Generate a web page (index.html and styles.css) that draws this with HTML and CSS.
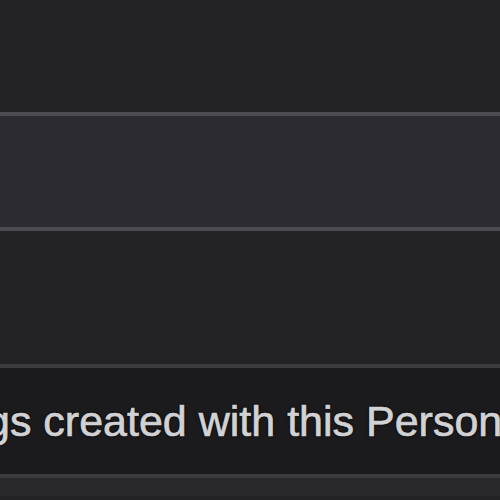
FILE: index.html
```html
<!DOCTYPE html>
<html lang="en">
<head>
    <meta charset="UTF-8">
    <meta name="viewport" content="width=device-width, initial-scale=1.0">
    <title>Persona Settings</title>
    <link rel="stylesheet" href="styles.css">
</head>
<body>
    <div class="page">
        <div class="header-space"></div>

        <div class="row row-light"></div>

        <div class="row row-plain"></div>

        <div class="note">
            <p class="note-text">gs created with this Persona</p>
        </div>

        <div class="row row-footer"></div>
    </div>
</body>
</html>
```

FILE: styles.css
```css
body {
    margin: 0;
    background-color: #232326;
    font-family: "Liberation Sans", Arial, sans-serif;
    overflow: hidden;
}
.page {
    width: 500px;
    height: 500px;
    display: flex;
    flex-direction: column;
    overflow: hidden;
}
.header-space {
    height: 112px;
    flex-shrink: 0;
}
.row {
    flex-shrink: 0;
    border-top: 4px solid #4b4b50;
}
.row-light {
    height: 111px;
    background-color: #2c2c30;
}
.row-plain {
    height: 133px;
    background-color: #232326;
}
.note {
    flex-shrink: 0;
    height: 110px;
    box-sizing: border-box;
    padding-top: 32px;
    background-color: #1b1b1d;
    border-top: 4px solid #3c3c40;
    overflow: hidden;
}
.note-text {
    margin: 0;
    font-size: 43px;
    line-height: 43px;
    color: #d2d2d4;
    white-space: nowrap;
    text-indent: -14px;
    -webkit-text-stroke: 0.7px #d2d2d4;
    text-shadow: 0 0 1px #000, 0 0 3px #000;
}
.row-footer {
    height: 18px;
    background-color: #29292c;
    border-top-color: #3d3d41;
}
```
